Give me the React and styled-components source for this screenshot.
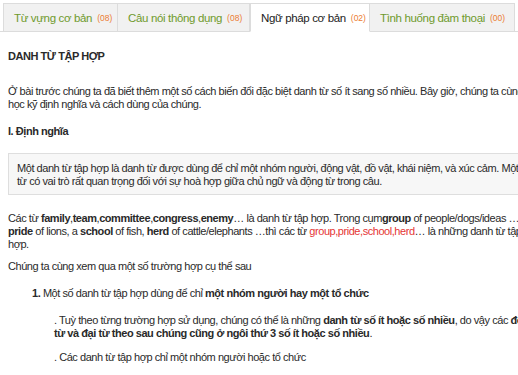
import React from "react";
import styled, { createGlobalStyle } from "styled-components";

const Global = createGlobalStyle`
  html, body { margin: 0; padding: 0; background: #fff; overflow: hidden; }
  body { font-family: "Liberation Sans", Arial, sans-serif; color: #2a2a2a; }
`;

const Page = styled.div`
  width: 518px;
  height: 375px;
  overflow: hidden;
`;

const TabBar = styled.div`
  display: flex;
  padding: 3px 0 0 3px;
  border-bottom: 1px solid #dcdcdc;
  height: 28px;
`;

const Tab = styled.div`
  display: flex;
  align-items: center;
  gap: 5px;
  padding: 0 0 0 10px;
  width: ${(p) => p.w}px;
  box-sizing: border-box;
  background: ${(p) => (p.active ? "#fff" : "#f1f1f1")};
  border: 1px solid #dcdcdc;
  border-left: ${(p) => (p.first || p.active ? "1px solid #dcdcdc" : "none")};
  border-bottom: ${(p) => (p.active ? "1px solid #fff" : "none")};
  margin-bottom: ${(p) => (p.active ? "-1px" : "0")};
  white-space: nowrap;
`;

const TabLabel = styled.span`
  font-size: 11.5px;
  letter-spacing: -0.35px;
  color: ${(p) => (p.active ? "#222" : "#6f9a2c")};
`;

const Count = styled.span`
  font-size: 8.5px;
  color: #ec7d33;
`;

const Content = styled.div`
  padding: 0 8px;
  font-size: 11px;
  line-height: 13px;
  letter-spacing: -0.45px;
  white-space: nowrap;
`;

const Title = styled.h1`
  margin: 18px 0 0;
  font-size: 11px;
  font-weight: bold;
  line-height: 13px;
`;

const Para = styled.p`
  margin: ${(p) => p.mt || 22}px 0 0;
  padding-left: ${(p) => p.indent || 0}px;
`;

const Heading = styled.h2`
  margin: 14px 0 0;
  font-size: 11px;
  font-weight: bold;
  line-height: 13px;
`;

const Quote = styled.div`
  margin: 15px -40px 0 0;
  padding: 8px 8px 6px;
  background: #f7f7f7;
  border: 1px solid #dedede;
`;

const Red = styled.span`
  color: #e53535;
`;

export default function App() {
  return (
    <Page>
      <Global />
      <TabBar>
        <Tab w={115} first>
          <TabLabel>Từ vựng cơ bản</TabLabel>
          <Count>(08)</Count>
        </Tab>
        <Tab w={132}>
          <TabLabel>Câu nói thông dụng</TabLabel>
          <Count>(08)</Count>
        </Tab>
        <Tab w={120} active>
          <TabLabel active>Ngữ pháp cơ bản</TabLabel>
          <Count>(02)</Count>
        </Tab>
        <Tab w={145}>
          <TabLabel>Tình huống đàm thoại</TabLabel>
          <Count>(00)</Count>
        </Tab>
      </TabBar>
      <Content>
        <Title>DANH TỪ TẬP HỢP</Title>
        <Para>
          Ở bài trước chúng ta đã biết thêm một số cách biến đổi đặc biệt danh từ số ít sang số nhiều. Bây giờ, chúng ta cùng
          <br />
          học kỹ định nghĩa và cách dùng của chúng.
        </Para>
        <Heading>I. Định nghĩa</Heading>
        <Quote>
          Một danh từ tập hợp là danh từ được dùng để chỉ một nhóm người, động vật, đồ vật, khái niệm, và xúc cảm. Một danh
          <br />
          từ có vai trò rất quan trọng đối với sự hoà hợp giữa chủ ngữ và động từ trong câu.
        </Quote>
        <Para mt={17}>
          Các từ <b>family</b>,<b>team</b>,<b>committee</b>,<b>congress</b>,<b>enemy</b>… là danh từ tập hợp. Trong cụm<b>group</b> of people/dogs/ideas …, a
          <br />
          <b>pride</b> of lions, a <b>school</b> of fish, <b>herd</b> of cattle/elephants …thì các từ <Red>group,pride,school,herd</Red>… là những danh từ tập
          <br />
          hợp.
        </Para>
        <Para mt={9}>Chúng ta cùng xem qua một số trường hợp cụ thể sau</Para>
        <Para mt={14} indent={24}>
          <b>1.</b> Một số danh từ tập hợp dùng để chỉ <b>một nhóm người hay một tổ chức</b>
        </Para>
        <Para mt={14} indent={46}>
          . Tuỳ theo từng trường hợp sử dụng, chúng có thể là những <b>danh từ số ít hoặc số nhiều</b>, do vậy các <b>động</b>
          <br />
          <b>từ và đại từ theo sau chúng cũng ở ngôi thứ 3 số ít hoặc số nhiều</b>.
        </Para>
        <Para mt={11} indent={46}>
          . Các danh từ tập hợp chỉ một nhóm người hoặc tổ chức
        </Para>
      </Content>
    </Page>
  );
}
